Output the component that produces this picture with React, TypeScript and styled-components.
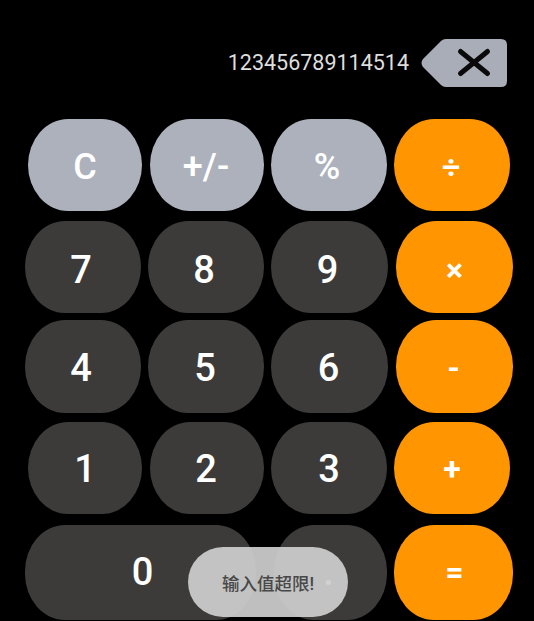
import React from "react"
import styled, { createGlobalStyle } from "styled-components"

const GlobalStyle = createGlobalStyle`
  html, body {
    margin: 0;
    padding: 0;
    background: #000;
  }
`

const rows = [
  {
    top: 0, left: 28, height: 92, dy: 2,
    keys: [
      { label: "C", kind: "fn", w: 114, gap: 8, dx: 0 },
      { label: "+/-", kind: "fn", w: 114, gap: 7, dx: -1 },
      { label: "%", kind: "fn", w: 116, gap: 7, dx: -2 },
      { label: "÷", kind: "op", w: 116, gap: 0, dx: -1 },
    ],
  },
  {
    top: 10, left: 25, height: 92, dy: 3,
    keys: [
      { label: "7", kind: "num", w: 116, gap: 7, dx: -2 },
      { label: "8", kind: "num", w: 116, gap: 7, dx: -2 },
      { label: "9", kind: "num", w: 117, gap: 8, dx: -2 },
      { label: "×", kind: "op", w: 117, gap: 0, dx: 0 },
    ],
  },
  {
    top: 7, left: 25, height: 93, dy: 1,
    keys: [
      { label: "4", kind: "num", w: 116, gap: 7, dx: -2 },
      { label: "5", kind: "num", w: 116, gap: 7, dx: -1 },
      { label: "6", kind: "num", w: 117, gap: 8, dx: -1 },
      { label: "-", kind: "op", w: 117, gap: 0, dx: -1 },
    ],
  },
  {
    top: 9, left: 28, height: 92, dy: 1,
    keys: [
      { label: "1", kind: "num", w: 114, gap: 8, dx: 0 },
      { label: "2", kind: "num", w: 114, gap: 7, dx: -1 },
      { label: "3", kind: "num", w: 116, gap: 7, dx: 0 },
      { label: "+", kind: "op", w: 116, gap: 0, dx: 0 },
    ],
  },
  {
    top: 11, left: 25, height: 95, dy: -1,
    keys: [
      { label: "0", kind: "num", w: 231, gap: 18, dx: 2 },
      { label: ".", kind: "num", w: 113, gap: 7, dx: -2 },
      { label: "=", kind: "op", w: 119, gap: 0, dx: 1 },
    ],
  },
]

export default function App() {
  return (
    <Screen>
      <GlobalStyle />
      <Display>
        <Value>123456789114514</Value>
        <BackspaceIcon />
      </Display>
      <Keypad>
        {rows.map((row) => (
          <Row key={row.keys[0].label} $top={row.top} $left={row.left} $height={row.height}>
            {row.keys.map((k) => (
              <Key key={k.label} $kind={k.kind} $w={k.w} $gap={k.gap} $dx={k.dx} $dy={row.dy}>
                {k.label}
              </Key>
            ))}
          </Row>
        ))}
      </Keypad>
      <Toast>输入值超限!</Toast>
    </Screen>
  )
}

const BackspaceIcon = () => (
  <svg width="88" height="50" viewBox="0 0 88 50">
    <path
      d="M26 1 H81 Q87 1 87 7 V43 Q87 49 81 49 H26 Q23 49 21 47 L3 29 Q0 25 3 21 L21 3 Q23 1 26 1 Z"
      fill="#a9adb8"
    />
    <path d="M40.5 13.5 L67.5 35.5 M67.5 13.5 L40.5 35.5" stroke="#0a0a0a" strokeWidth="5" strokeLinecap="round" fill="none" />
  </svg>
)

const Screen = styled.div`
  position: relative;
  width: 534px;
  height: 621px;
  overflow: hidden;
  background: #000;
  font-family: Roboto, "Noto Sans CJK SC", sans-serif;
`

const Display = styled.div`
  display: flex;
  align-items: center;
  justify-content: flex-end;
  gap: 11px;
  height: 50px;
  padding: 38px 26px 31px 0;
`

const Value = styled.span`
  color: #dedede;
  font-size: 21.5px;
  line-height: 50px;
`

const Keypad = styled.div`
  display: flex;
  flex-direction: column;
`

const Row = styled.div<{ $top: number; $left: number; $height: number }>`
  display: flex;
  height: ${(p) => p.$height}px;
  margin-top: ${(p) => p.$top}px;
  padding-left: ${(p) => p.$left}px;
`

const keyColors = {
  fn: "#adb1bc",
  num: "#3c3b3a",
  op: "#ff9500",
}

const Key = styled.div<{ $kind: string; $w: number; $gap: number; $dx: number; $dy: number }>`
  display: flex;
  align-items: center;
  justify-content: center;
  flex: none;
  box-sizing: border-box;
  width: ${(p) => p.$w}px;
  margin-right: ${(p) => p.$gap}px;
  padding-top: ${(p) => Math.max(p.$dy, 0) * 2}px;
  padding-bottom: ${(p) => Math.max(-p.$dy, 0) * 2}px;
  padding-left: ${(p) => Math.max(p.$dx, 0) * 2}px;
  padding-right: ${(p) => Math.max(-p.$dx, 0) * 2}px;
  border-radius: 40px / 46px;
  background: ${(p) => keyColors[p.$kind]};
  color: #fff;
  font-weight: ${(p) => (p.$kind === "op" ? 700 : 500)};
  font-size: ${(p) => (p.$kind === "op" ? 32 : p.$kind === "fn" ? 36 : 38)}px;
`

const Toast = styled.div`
  position: absolute;
  left: 188px;
  top: 547px;
  display: flex;
  align-items: center;
  justify-content: center;
  width: 160px;
  height: 70px;
  border-radius: 35px;
  background: rgba(205, 205, 205, 0.93);
  color: #484848;
  font-size: 17.5px;
  font-weight: 500;
`
